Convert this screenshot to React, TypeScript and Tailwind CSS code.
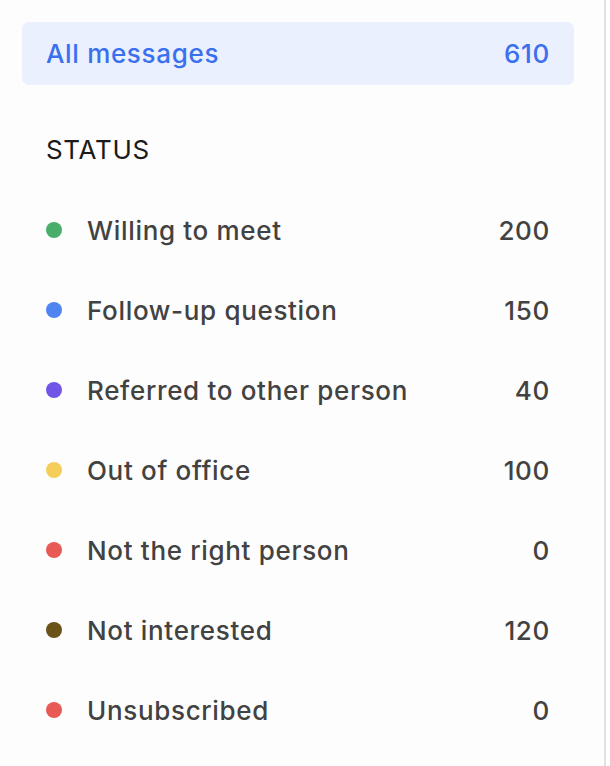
const statuses = [
  { label: 'Willing to meet', count: 200, color: 'bg-[#4aae6b]' },
  { label: 'Follow-up question', count: 150, color: 'bg-[#4f84f1]' },
  { label: 'Referred to other person', count: 40, color: 'bg-[#7155e6]' },
  { label: 'Out of office', count: 100, color: 'bg-[#f5ce5a]' },
  { label: 'Not the right person', count: 0, color: 'bg-[#e85a56]' },
  { label: 'Not interested', count: 120, color: 'bg-[#6b5218]' },
  { label: 'Unsubscribed', count: 0, color: 'bg-[#e85a56]' },
]

export default function App() {
  return (
    <div className="flex h-[766px] w-[610px] bg-white font-['Inter',sans-serif] tracking-[0.042em]">
      <div className="w-[606px] border-r-2 border-[#e2e2e2] bg-[#fdfdfd] pl-[22px] pr-[30px] pt-[22px]">
        {/* All messages */}
        <div className="flex h-[63px] items-center justify-between rounded-[7px] bg-[#eaf0fd] px-6 text-[26px] font-medium text-[#3a6ff0]">
          <span>All messages</span>
          <span>610</span>
        </div>

        <div className="mt-[49px] px-6 text-[26px] leading-[32px] font-normal text-[#1b1b1b]">STATUS</div>

        {/* Status list */}
        <div className="mt-[24px] flex flex-col">
          {statuses.map((s, i) => (
            <div key={i} className="flex h-[80px] items-center justify-between px-6 text-[26px] font-medium text-[#424242]">
              <div className="flex items-center">
                <span className={`h-[16px] w-[16px] rounded-full ${s.color}`}></span>
                <span className="ml-[25px]">{s.label}</span>
              </div>
              <span>{s.count}</span>
            </div>
          ))}
        </div>
      </div>
    </div>
  )
}
